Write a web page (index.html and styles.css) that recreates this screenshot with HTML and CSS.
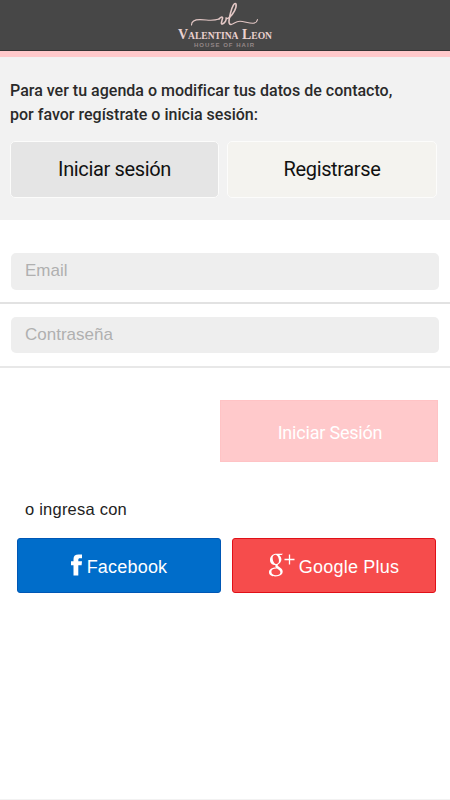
FILE: index.html
```html
<!DOCTYPE html>
<html lang="es">
<head>
<meta charset="utf-8">
<title>Valentina Leon</title>
<link rel="stylesheet" href="styles.css">
</head>
<body>
<header class="header">
  <svg class="logo" viewBox="0 0 120 50" width="120" height="50">
    <g class="script">
      <path d="M26.500 25C26.500 21 30 19.600 35 19.600C42 19.600 47 21.500 54 19"/>
      <path class="bold" d="M54 19C56 16.500 58 16.500 57.500 18.500C56.700 21.500 55.500 24.500 57.500 24C60 23 62 19.500 61 17.500C61 19 63 18.700 64.500 17.500"/>
      <path class="bold" d="M64.500 17.500C68.500 13.500 72 7.500 71 4C69.500 1.800 67 7 65.500 13C63.800 19.500 63 24.500 66 24.500"/>
      <path d="M66 24.500C69.500 24 70 21.300 75 21.300C81 21.300 91 26.800 92.500 19.500"/>
    </g>
    <text class="brand" x="13" y="39.400" textLength="94" lengthAdjust="spacingAndGlyphs">Valentina Leon</text>
    <text class="tagline" x="29" y="46.500" textLength="60">HOUSE OF HAIR</text>
  </svg>
</header>
<main>
  <section class="intro">
    <p>Para ver tu agenda o modificar tus datos de contacto,<br>por favor regístrate o inicia sesión:</p>
    <nav class="tabs">
      <button class="tab active">Iniciar sesión</button>
      <button class="tab register">Registrarse</button>
    </nav>
  </section>
  <form class="form">
    <div class="field"><input type="text" placeholder="Email"></div>
    <div class="field second"><input type="password" placeholder="Contraseña"></div>
    <button class="login" type="button">Iniciar Sesión</button>
  </form>
  <p class="or">o ingresa con</p>
  <div class="social">
    <button class="facebook">
      <svg width="12" height="22" viewBox="0 0 12 22"><path d="M2.500 21.500V11.300H0V7.300H2.500V5C2.500 1.800 4.300.4 7.500.4H11V4.300H9C7.700 4.300 7.300 4.800 7.300 6V7.300H11L10.600 11.300H7.300V21.500Z"/></svg>
      <span>Facebook</span>
    </button>
    <button class="google">
      <svg width="26" height="24" viewBox="0 0 26 24">
        <path class="letter" fill-rule="evenodd" d="M14 .8L12.600 2H10.200C13.600 5.200 12.800 9 9.600 11C8.300 12 8.300 12.600 9.700 13.600C12 15.300 13.700 16.300 13.700 18.600C13.700 21.300 11.300 23.400 6.400 23.400C2.300 23.400 0 21.700 0 19.200C0 16.300 3 14.700 7.200 14.600C6.200 13.600 6.100 12.900 6.500 12C2.900 12.200 1 9.800 1 7C1 3.500 3.600.8 7.400.8ZM6.200 1.700C4.300 1.900 3.300 3.500 3.700 6C4.100 9 5.600 11.200 7.500 11C9.500 10.800 10.200 9.100 9.900 6.800C9.500 3.800 8 1.500 6.200 1.700ZM8 15.500C4.500 15.400 2.400 16.500 2.400 18.800C2.400 21 4.200 22.300 7 22.300C9.700 22.300 11.400 21.200 11.400 19.300C11.400 17.700 10 16.900 8 15.500Z"/>
        <path class="plus" d="M15.500 6.500H25.500M20.500 1.500V11.500"/>
      </svg>
      <span>Google Plus</span>
    </button>
  </div>
</main>
</body>
</html>
```
FILE: styles.css
```css
* { box-sizing: border-box; }
body {
  margin: 0;
  min-height: 800px;
  background: #fff;
  border-bottom: 1px solid #f2f2f2;
  font-family: Roboto, sans-serif;
}
button { font: inherit; padding: 0; margin: 0; }
.header {
  height: 57px;
  background: #474747;
  border-bottom: 6px solid #ffc9cb;
  display: flex;
  justify-content: center;
  align-items: flex-start;
  box-shadow: inset 0 -1px #353535;
}
.logo { display: block; }
.script path { fill: none; stroke: #e4c8c6; stroke-width: 1.1; stroke-linecap: round; }
.script .bold { stroke-width: 1.6; }
.brand { font: bold 14.5px "Liberation Serif", serif; font-variant: small-caps; fill: #ead1cf; }
.tagline { font: bold 6px "Liberation Sans", sans-serif; fill: #948887; }
.intro {
  height: 163px;
  padding: 22px 13px 0 10px;
  background: #f2f2f2;
}
.intro p {
  margin: 0;
  font-size: 16px;
  font-weight: 500;
  line-height: 24px;
  letter-spacing: 0.01px;
  color: #2a2a2a;
  white-space: nowrap;
}
.tabs { display: flex; gap: 8px; margin-top: 14px; }
.tab {
  width: 209px;
  height: 57px;
  border: 1px solid #fcfcfb;
  border-radius: 5px;
  background: #e5e5e5;
  font-size: 20px;
  letter-spacing: -0.36px;
  color: #111;
  padding-bottom: 2px;
}
.register { background: #f4f3ef; width: 210px; }
.form { padding-top: 33px; display: flex; flex-direction: column; }
.field {
  height: 51px;
  padding: 0 11px;
  border-bottom: 2px solid #e2e2e2;
}
.second { height: 64px; padding-top: 13px; border-color: #e8e8e8; }
.field input {
  display: block;
  width: 100%;
  height: 37px;
  border: 0;
  border-radius: 5px;
  background: #eee;
  padding: 0 14px 2px;
  font: 17px "Liberation Sans", sans-serif;
}
.second input { height: 36px; padding-bottom: 1px; }
.field input::placeholder { color: #b0b0b0; opacity: 1; }
.login {
  align-self: flex-end;
  width: 218px;
  height: 62px;
  margin: 32px 12px 0 0;
  border: 1px solid #ffc3c5;
  background: #ffc9cb;
  color: #fff;
  font-size: 18px;
  letter-spacing: -0.2px;
  padding: 3px 0 0 2px;
}
.or {
  margin: 37px 0 0 25px;
  font: 16.5px/20px "Liberation Sans", sans-serif;
  letter-spacing: 0.22px;
  color: #222;
}
.social { display: flex; gap: 11px; margin: 19px 0 0 17px; }
.social button {
  display: flex;
  align-items: center;
  justify-content: center;
  gap: 4px;
  width: 204px;
  height: 55px;
  border: 1px solid #0057b5;
  border-radius: 3px;
  color: #fff;
  font: 18px "Liberation Sans", sans-serif;
  letter-spacing: 0.2px;
  padding-top: 2px;
}
.social span { padding-top: 1px; }
.social svg { display: block; fill: #fff; }
.social .facebook { background: #006dca; }
.social .google { background: #f64c4c; border-color: #e01018; }
.facebook svg { margin-top: -4px; }
.google svg { margin-top: -3px; }
.google .plus { stroke: #fff; stroke-width: 1.3; }
```
